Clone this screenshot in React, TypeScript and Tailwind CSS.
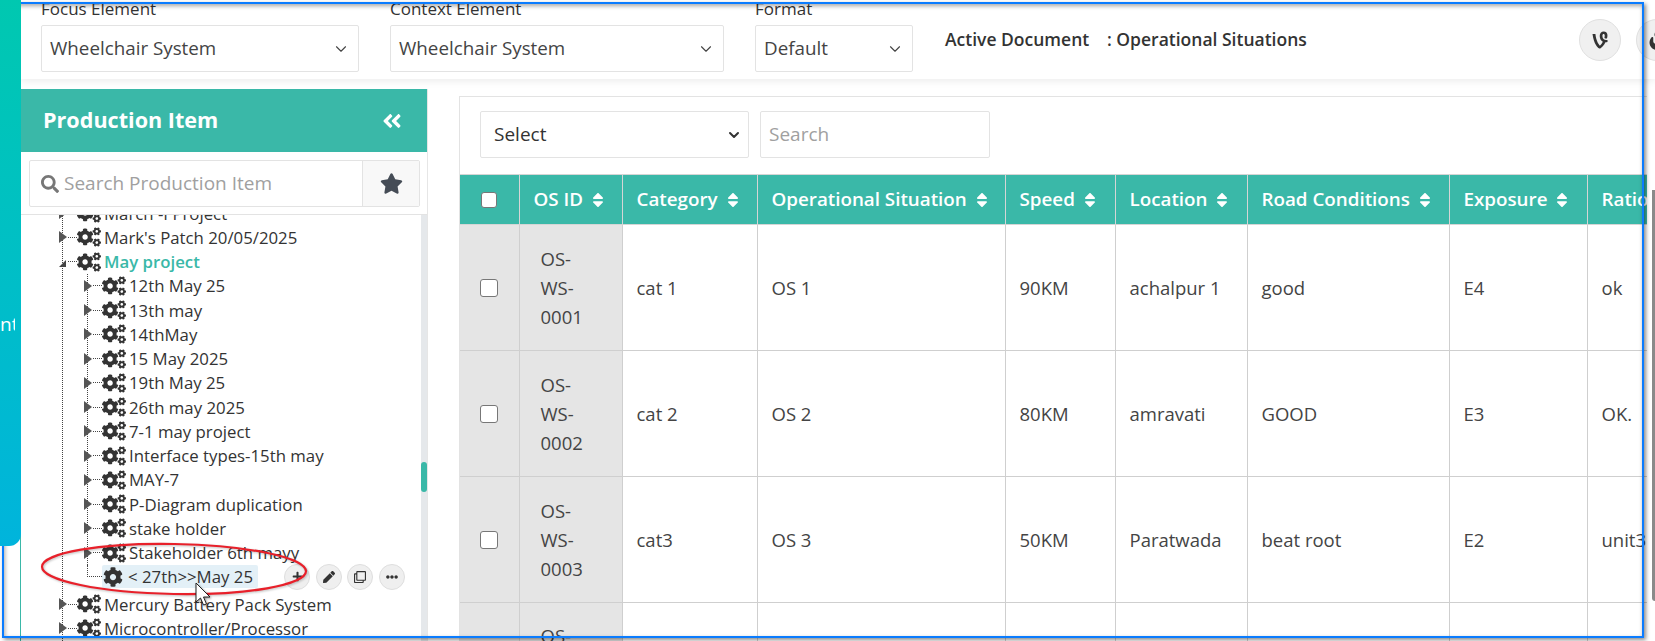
import { FaAngleDoubleLeft, FaCog, FaCogs, FaEllipsisH, FaFire, FaPen, FaPlus, FaRegClone, FaSearch, FaSort, FaStar, FaVine } from 'react-icons/fa';
import { ChevronDown } from 'lucide-react';

const level1 = [
  '12th May 25',
  '13th may',
  '14thMay',
  '15 May 2025',
  '19th May 25',
  '26th may 2025',
  '7-1 may project',
  'Interface types-15th may',
  'MAY-7',
  'P-Diagram duplication',
  'stake holder',
  'Stakeholder 6th mayy',
];

const columns = [
  { label: 'OS ID', width: 'w-[103px]' },
  { label: 'Category', width: 'w-[135px]' },
  { label: 'Operational Situation', width: 'w-[248px]' },
  { label: 'Speed', width: 'w-[110px]' },
  { label: 'Location', width: 'w-[132px]' },
  { label: 'Road Conditions', width: 'w-[202px]' },
  { label: 'Exposure', width: 'w-[138px]' },
  { label: 'Ratio', width: 'w-[60px]' },
];

const rows = [
  ['cat 1', 'OS 1', '90KM', 'achalpur 1', 'good', 'E4', 'ok'],
  ['cat 2', 'OS 2', '80KM', 'amravati', 'GOOD', 'E3', 'OK.'],
  ['cat3', 'OS 3', '50KM', 'Paratwada', 'beat root', 'E2', 'unit3'],
];

function HeaderSelect({ label, value, width }: { label: string; value: string; width: string }) {
  return (
    <div className={`${width} shrink-0`}>
      <div className="h-[21px] whitespace-nowrap text-[17px] leading-[23px] text-[#333]">{label}</div>
      <div className="mt-[7px] flex h-[47px] items-center justify-between rounded-[2px] border border-[#e3e3e3] pl-[8px] pr-[8px] text-[18.8px] text-[#444]">
        {value}
        <ChevronDown className="h-[18px] w-[18px] text-[#444]" strokeWidth={1.5} />
      </div>
    </div>
  );
}

function TreeRow({ label, active }: { label: string; active?: boolean }) {
  return (
    <div className="flex h-[24.25px] items-center">
      {active ? (
        <svg className="-ml-[5px] h-[10px] w-[10px] shrink-0 translate-y-[1px] fill-[#444]" viewBox="0 0 10 10">
          <path d="M1 9 L8 9 L8 2 Z" />
        </svg>
      ) : (
        <svg className="-ml-[5px] h-[12px] w-[10px] shrink-0 fill-[#555]" viewBox="0 0 10 12">
          <path d="M1 0 L9 6 L1 12 Z" />
        </svg>
      )}
      <span className="w-[9px] shrink-0 border-t border-dotted border-[#444]" />
      <FaCogs className="h-[22px] w-[24px] shrink-0 text-[#333]" />
      <span className={`ml-[3px] whitespace-nowrap text-[16.8px] ${active ? 'font-semibold text-[#3ab8a8]' : 'font-medium text-[#333]'}`}>
        {label}
      </span>
    </div>
  );
}

function ActionButton({ children }: { children: React.ReactNode }) {
  return (
    <span className="flex h-[26px] w-[26px] items-center justify-center rounded-full border border-[#dedede] bg-[#efefef] text-[13px] text-[#333]">
      {children}
    </span>
  );
}

function Tree() {
  return (
    <div className="ml-[41px] -mt-[14px] border-l border-dotted border-[#444]">
      <TreeRow label="March -I Project" />
      <TreeRow label="Mark's Patch 20/05/2025" />
      <TreeRow label="May project" active />
      <div className="ml-[24px]">
        <div className="border-l border-dotted border-[#444]">
          {level1.map((item) => (
            <TreeRow key={item} label={item} />
          ))}
        </div>
        <div className="flex h-[24.25px] items-center">
          <span className="h-[12px] w-[15px] shrink-0 self-start border-b border-l border-dotted border-[#444]" />
          <span className="flex h-[23px] w-[156px] shrink-0 items-center rounded-[2px] bg-[#e3f0f7] text-[16.8px] font-medium text-[#333]">
            <FaCog className="ml-[1px] h-[20px] w-[20px] text-[#333]" />
            <span className="ml-[5px] whitespace-nowrap">&lt; 27th&gt;&gt;May 25</span>
          </span>
          <div className="ml-[26px] flex gap-[5.5px]">
            <ActionButton><FaPlus className="h-[11px] w-[11px]" /></ActionButton>
            <ActionButton><FaPen className="h-[12px] w-[12px]" /></ActionButton>
            <ActionButton><FaRegClone className="h-[12px] w-[12px]" /></ActionButton>
            <ActionButton><FaEllipsisH className="h-[12px] w-[12px]" /></ActionButton>
          </div>
        </div>
      </div>
      <div className="pt-[3px]">
        <TreeRow label="Mercury Battery Pack System" />
        <TreeRow label="Microcontroller/Processor" />
      </div>
    </div>
  );
}

function Sidebar() {
  return (
    <aside className="mt-[10px] h-[552px] w-[407px] shrink-0 border-r border-[#e6e6e6]">
      <div className="flex h-[63px] items-center justify-between bg-[#3ab8a8] pl-[22px] pr-[24px] text-white">
        <span className="text-[21.6px] font-bold">Production Item</span>
        <FaAngleDoubleLeft className="h-[22px] w-[22px]" />
      </div>
      <div className="flex h-[63px] items-start border-b border-[#e3e3e3] pl-[8px] pr-[7px] pt-[8px]">
        <div className="flex h-[47px] flex-1 items-center rounded-[2px] border border-[#e3e3e3]">
          <FaSearch className="ml-[11px] h-[18px] w-[18px] text-[#777]" />
          <span className="ml-[5px] flex-1 text-[19px] text-[#a0a0a0]">Search Production Item</span>
          <span className="flex h-full w-[57px] items-center justify-center border-l border-[#e3e3e3] bg-[#f8f8f8]">
            <FaStar className="h-[21px] w-[23px] text-[#454c56]" />
          </span>
        </div>
      </div>
      <div className="flex h-[426px] overflow-hidden">
        <div className="min-w-0 flex-1">
          <Tree />
        </div>
        <div className="w-[6px] shrink-0 bg-[#e5e8eb] pt-[247px]">
          <div className="h-[30px] rounded-[3px] bg-[#3ab8a8]" />
        </div>
      </div>
    </aside>
  );
}

function DataTable() {
  return (
    <div className="mt-[17px] w-[1188px] shrink-0 border-l border-t border-[#e3e3e3]">
      <div className="flex h-[77px] gap-[11px] pl-[20px] pt-[14px]">
        <div className="flex h-[47px] w-[269px] items-center justify-between rounded-[2px] border border-[#e3e3e3] pl-[13px] pr-[6px] text-[19px] text-[#333]">
          Select
          <ChevronDown className="h-[16px] w-[16px] text-[#333]" strokeWidth={3} />
        </div>
        <div className="flex h-[47px] w-[230px] items-center rounded-[2px] border border-[#e3e3e3] pl-[8px] text-[19px] text-[#a0a0a0]">
          Search
        </div>
      </div>
      <table className="w-[1187px] table-fixed border-collapse text-[18.5px] text-[#444]">
        <thead>
          <tr className="h-[50px] border-b border-t border-[#d5d5d5] bg-[#3ab8a8] text-white">
            <th className="w-[59px]">
              <span className="mx-auto block h-[16px] w-[16px] rounded-[3px] border border-[#777] bg-white" />
            </th>
            {columns.map((col) => (
              <th key={col.label} className={`${col.width} overflow-hidden whitespace-nowrap border-l border-[#d5d5d5] pl-[14px] text-left text-[18.8px] font-semibold first:border-l-0`}>
                <span className="inline-flex items-center gap-[9px]">
                  {col.label}
                  <FaSort className="h-[18px] w-[12px]" />
                </span>
              </th>
            ))}
          </tr>
        </thead>
        <tbody>
          {rows.map((row, i) => (
            <tr key={row[0]} className="h-[126px] border-b border-[#cfcfcf]">
              <td className="bg-[#e5e5e5] text-center">
                <span className="mx-auto block h-[18px] w-[18px] rounded-[3px] border border-[#777] bg-white" />
              </td>
              <td className="border-l border-[#cfcfcf] bg-[#e5e5e5] px-[21px] leading-[29px]">
                <span className="block">OS-</span>
                <span className="block">WS-</span>
                <span className="block">000{i + 1}</span>
              </td>
              {row.map((cell, c) => (
                <td key={c} className="overflow-hidden whitespace-nowrap border-l border-[#cfcfcf] pl-[14px]">
                  {cell}
                </td>
              ))}
            </tr>
          ))}
          <tr className="h-[60px]">
            <td className="bg-[#e5e5e5]" />
            <td className="border-l border-[#cfcfcf] bg-[#e5e5e5] px-[21px] pt-[19px] align-top">OS-</td>
            {rows[0].map((_, c) => (
              <td key={c} className="border-l border-[#cfcfcf]" />
            ))}
          </tr>
        </tbody>
      </table>
    </div>
  );
}

export default function App() {
  return (
    <div className="relative h-[641px] w-[1655px] overflow-hidden bg-white font-['Open_Sans',sans-serif] text-[#333]">
      <div className="flex h-full">
        <nav className="relative z-10 -mr-[1px] h-[546px] w-[21px] shrink-0 rounded-br-[12px] bg-gradient-to-b from-[#00c8b0] to-[#00b4dc] text-[19px] leading-none text-white">
          <div className="h-[315px]" />
          <div className="w-[15px] overflow-hidden whitespace-nowrap text-right">nt</div>
        </nav>
        <div className="min-w-0 flex-1 border-l border-[#3ab8a8]">
          <header className="flex h-[79px] items-start pl-[20px] shadow-[0_2px_8px_rgba(0,0,0,0.08)]">
            <div className="-mt-[3px] flex gap-[31px]">
              <HeaderSelect label="Focus Element" value="Wheelchair System" width="w-[318px]" />
              <HeaderSelect label="Context Element" value="Wheelchair System" width="w-[334px]" />
              <HeaderSelect label="Format" value="Default" width="w-[158px]" />
            </div>
            <div className="ml-[32px] flex h-[78px] shrink-0 items-center whitespace-nowrap text-[17.5px] font-semibold text-[#333]">
              <span className="w-[162px]">Active Document</span>
              <span>: Operational Situations</span>
            </div>
            <div className="ml-auto flex h-[79px] w-[76px] shrink-0 items-center gap-[15px] overflow-hidden">
              <span className="flex h-[42px] w-[42px] shrink-0 items-center justify-center rounded-full border border-[#e0e0e0] bg-[#f0f0f0] text-[20px] text-[#333]">
                <FaVine />
              </span>
              <span className="flex h-[42px] w-[42px] shrink-0 items-center justify-center rounded-full border border-[#e0e0e0] bg-[#f0f0f0] text-[20px] text-[#333]">
                <FaFire />
              </span>
            </div>
          </header>
          <div className="flex gap-[31px]">
            <Sidebar />
            <DataTable />
          </div>
        </div>
      </div>

      {/* scrollbar at far right */}
      <div className="absolute right-0 top-[190px] h-[411px] w-[3px] rounded-bl-[3px] bg-[#8a8a8a]" />

      {/* annotation drawn over the screenshot */}
      <svg className="pointer-events-none absolute left-[36px] top-[535px] h-[70px] w-[280px] drop-shadow-[1px_1px_1px_rgba(0,0,0,0.25)]" viewBox="0 0 280 70">
        <ellipse cx="138" cy="34" rx="132" ry="25" transform="rotate(1 138 34)" fill="none" stroke="#e8202a" strokeWidth="2.2" />
      </svg>
      <svg className="pointer-events-none absolute left-[195px] top-[582px] h-[28px] w-[20px] drop-shadow-[1px_1px_1px_rgba(0,0,0,0.4)]" viewBox="0 0 20 28">
        <path d="M1 1 L1 20 L5.5 16 L8.5 23 L11.5 22 L8.5 15 L15 15 Z" fill="#fff" stroke="#222" strokeWidth="1" />
      </svg>
      <div className="pointer-events-none absolute left-[2px] top-[2px] h-[636px] w-[1642px] border-2 border-[#0a7cff] shadow-[2px_2px_4px_rgba(0,0,0,0.45),inset_1px_2px_4px_rgba(0,0,0,0.35)]" />
    </div>
  );
}
